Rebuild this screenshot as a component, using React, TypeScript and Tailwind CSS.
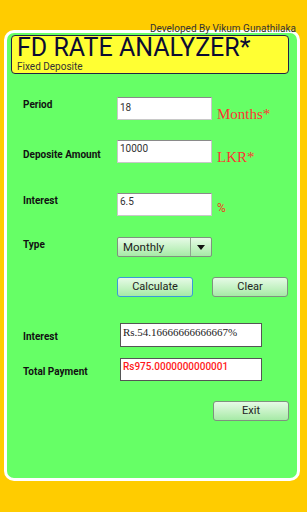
import React from "react";

function Label({ children, mt }: { children: React.ReactNode; mt: string }) {
  return (
    <div className={`w-[94px] shrink-0 text-[10px] leading-[13px] font-bold text-[#111] ${mt}`}>{children}</div>
  );
}

export default function App() {
  return (
    <div className="relative w-[307px] h-[512px] bg-[#ffcc00] overflow-hidden font-['Roboto','Noto_Sans',sans-serif]">
      <div className="absolute top-[24px] right-[11px] text-[10px] leading-[10px] text-[#333] z-10">
        Developed By Vikum Gunathilaka
      </div>
      <div className="ml-[4px] mt-[30px] w-[296px] h-[451px] border-[3px] border-white rounded-[10px] bg-[#66ff66] flex flex-col">
        {/* title */}
        <div className="ml-[4px] mt-[2px] w-[278px] h-[39px] bg-[#ffff33] border border-[#222244] rounded-[4px] pl-[5px]">
          <div className="text-[25px] leading-[24px] text-[#0b0b33] whitespace-nowrap">FD RATE ANALYZER*</div>
          <div className="text-[10px] leading-[12px] mt-[1px] text-[#333]">Fixed Deposite</div>
        </div>

        {/* Period */}
        <div className="flex mt-[23px] pl-[16px]">
          <Label mt="mt-[1px]">Period</Label>
          <div className="w-[95px] h-[23px] bg-white border border-[#c8c8c8] border-t-[#8a8a8a] text-[10px] leading-[13px] text-[#333] pl-[2px] pt-[3px]">18</div>
          <div className="self-end -mb-[3px] ml-[5px] text-[15px] leading-[18px] text-[#ff3333] font-['Liberation_Serif',serif]">Months*</div>
        </div>

        {/* Deposite */}
        <div className="flex mt-[20px] pl-[16px]">
          <Label mt="mt-[8px]">Deposite Amount</Label>
          <div className="w-[95px] h-[23px] bg-white border border-[#c8c8c8] border-t-[#8a8a8a] text-[10px] leading-[13px] text-[#333] pl-[2px] pt-[1px]">10000</div>
          <div className="self-end -mb-[3px] ml-[5px] text-[15px] leading-[18px] text-[#ff3333] font-['Liberation_Serif',serif]">LKR*</div>
        </div>

        {/* Interest */}
        <div className="flex mt-[30px] pl-[16px]">
          <Label mt="mt-[1px]">Interest</Label>
          <div className="w-[95px] h-[23px] bg-white border border-[#c8c8c8] border-t-[#8a8a8a] text-[10px] leading-[13px] text-[#333] pl-[2px] pt-[1px]">6.5</div>
          <div className="self-end mb-[1px] ml-[5px] text-[12px] leading-[14px] text-[#ee4422]">%</div>
        </div>

        {/* Type */}
        <div className="flex mt-[21px] pl-[16px]">
          <Label mt="mt-[1px]">Type</Label>
          <div className="w-[95px] h-[20px] flex rounded-[2px] border border-[#7f927f] bg-gradient-to-b from-[#e6fae6] to-[#a6eaa6]">
            <div className="w-[73px] border-r border-[#8fa58f] text-[11.5px] leading-[18px] text-[#222] pl-[5px]">Monthly</div>
            <div className="flex-1 flex items-center justify-center">
              <svg width="8" height="5" viewBox="0 0 8 5"><path d="M0 0h8L4 5z" fill="#111" /></svg>
            </div>
          </div>
        </div>

        {/* Buttons */}
        <div className="flex mt-[20px] pl-[110px] gap-[19px]">
          <div className="w-[76px] h-[20px] rounded-[3px] border border-[#3a9ad9] bg-gradient-to-b from-[#e6fae6] to-[#a6eaa6] text-[11px] leading-[18px] text-[#222] text-center">Calculate</div>
          <div className="w-[76px] h-[20px] rounded-[3px] border border-[#7f927f] bg-gradient-to-b from-[#e6fae6] to-[#a6eaa6] text-[11px] leading-[18px] text-[#222] text-center">Clear</div>
        </div>

        {/* Results */}
        <div className="flex items-center mt-[26px] pl-[16px]">
          <div className="w-[97px] shrink-0 text-[10px] leading-[13px] font-bold text-[#111] mt-[3px]">Interest</div>
          <div className="w-[142px] h-[24px] bg-white border border-[#555] text-[11px] leading-[14px] text-[#222] pl-[2px] pt-[1px] font-['Liberation_Serif',serif] whitespace-nowrap">Rs.54.16666666666667%</div>
        </div>
        <div className="flex items-center mt-[11px] pl-[16px]">
          <div className="w-[97px] shrink-0 text-[10px] leading-[13px] font-bold text-[#111] mt-[3px]">Total Payment</div>
          <div className="w-[142px] h-[23px] bg-white border border-[#555] text-[10px] leading-[13px] font-medium text-[#ff1a1a] pl-[2px] pt-[1px] whitespace-nowrap">Rs975.0000000000001</div>
        </div>

        <div className="flex justify-end mt-[20px] pr-[8px]">
          <div className="w-[76px] h-[20px] rounded-[3px] border border-[#7f927f] bg-gradient-to-b from-[#e6fae6] to-[#a6eaa6] text-[11px] leading-[18px] text-[#222] text-center">Exit</div>
        </div>
      </div>
    </div>
  );
}
